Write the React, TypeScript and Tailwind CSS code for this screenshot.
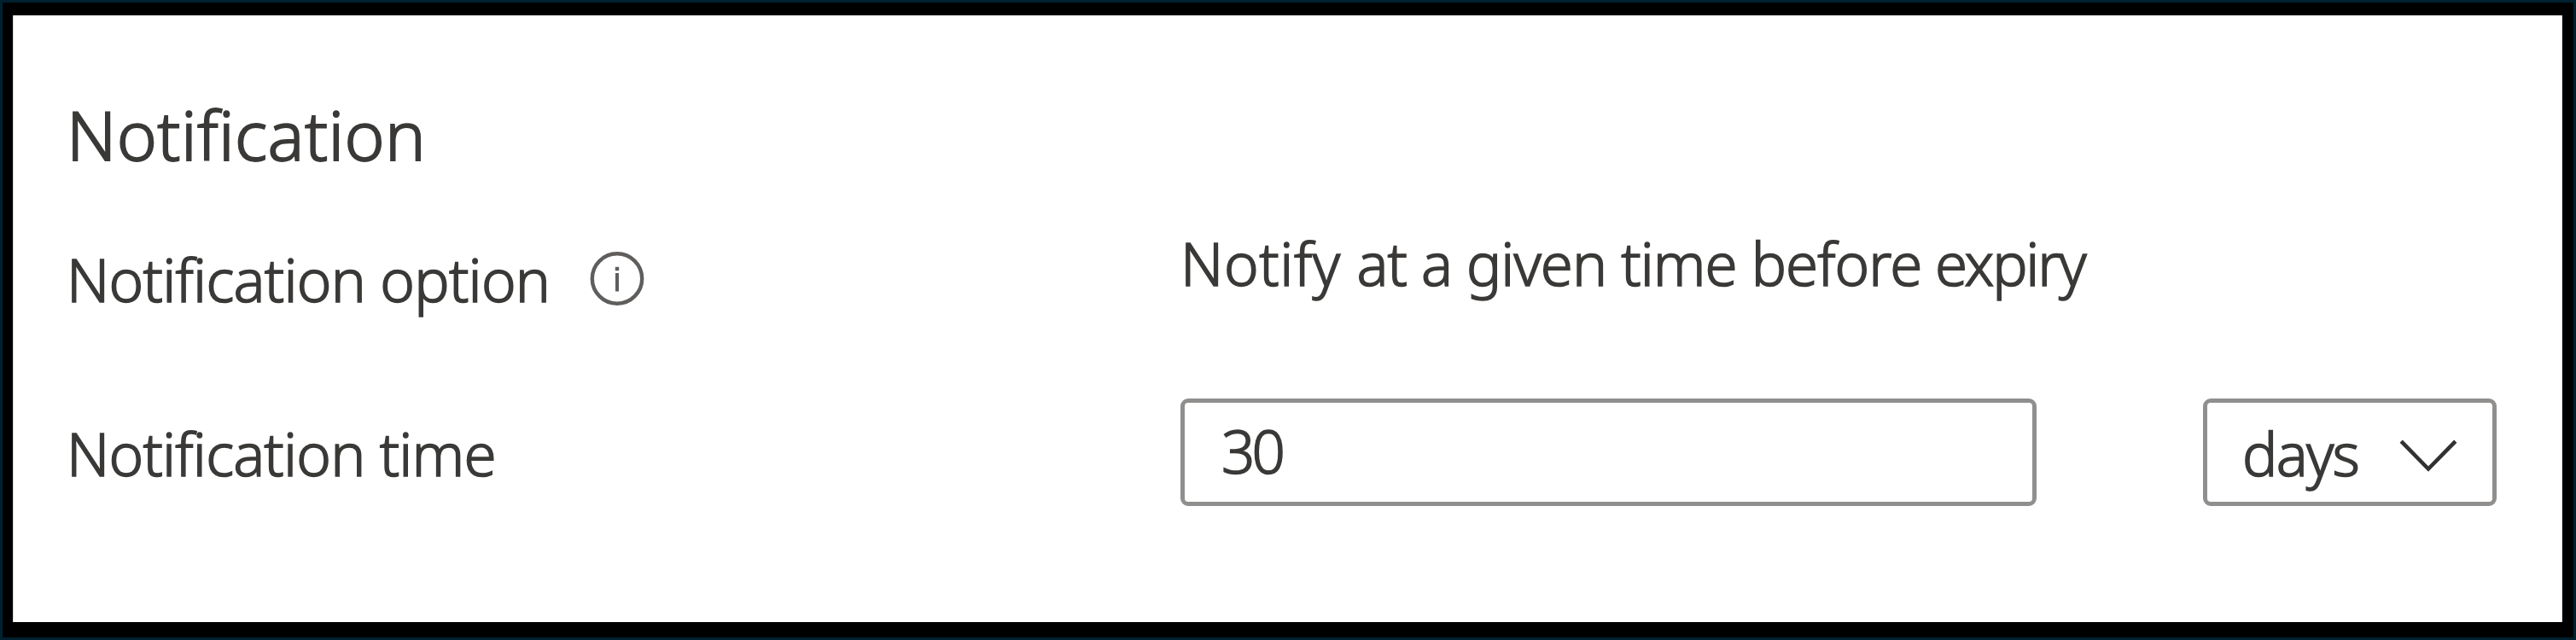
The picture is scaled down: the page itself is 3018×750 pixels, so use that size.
const textStyle =
  "block whitespace-nowrap text-[69px] font-light leading-[100px] [-webkit-text-stroke:1.5px_#3a3937]";

const boxStyle = "h-[126px] shrink-0 rounded-[9px] border-[5px] border-[#918f8d]";

function InfoIcon() {
  return (
    <svg className="mt-[16px] ml-[46px] h-[66px] w-[66px] shrink-0" viewBox="0 0 66 66" fill="none" stroke="#605e5c">
      <circle cx="33" cy="33.5" r="29.2" strokeWidth="4.4" />
      <path d="M33 27v21.5" strokeWidth="4" />
      <path d="M33 19.8v4.4" strokeWidth="4.4" />
    </svg>
  );
}

function ChevronDown() {
  return (
    <svg className="h-[38px] w-[68px] shrink-0" viewBox="0 0 68 38" fill="none" stroke="#323130" strokeWidth="4.6">
      <path d="M2.2 2.2 34 34.5 65.8 2.2" />
    </svg>
  );
}

export default function App() {
  return (
    <div className="h-[750px] w-[3018px] bg-[#00212f] p-[3px] font-['Noto_Sans',sans-serif] text-[#3a3937]">
      <div className="h-full bg-black px-3 pt-[15px] pb-[18px]">
        <main className="h-[711px] w-[2987px] border-x border-[#dcdcdc] bg-white pt-[89px] pl-[62px]">
          <h1 className="h-[151px] text-[80px] font-light leading-[100px] tracking-[0.4px] [-webkit-text-stroke:1.8px_#3a3937]">
            Notification
          </h1>
          <section className="flex h-[209px]">
            <div className="flex w-[1305px] shrink-0 pt-[19px]">
              <span className={`${textStyle} tracking-[-0.75px]`}>Notification option</span>
              <InfoIcon />
            </div>
            <p className={`${textStyle} tracking-[-0.95px]`}>
              <span className="tracking-[0.6px]">Notify </span>
              at a given time before
              <span className="tracking-[-2.2px]"> expiry</span>
            </p>
          </section>
          <section className="flex h-[126px]">
            <label htmlFor="notification-time" className={`${textStyle} w-[1305px] shrink-0 pt-[14px] tracking-[-0.8px]`}>
              Notification time
            </label>
            <div id="notification-time" className={`${boxStyle} w-[1003px] pt-[6px] pl-[43px]`}>
              <span className={`${textStyle} tracking-[-4px]`}>30</span>
            </div>
            <button type="button" className={`${boxStyle} ml-[195px] flex w-[344px] items-start pl-[41px]`}>
              <span className={`${textStyle} w-[184px] pt-[9px] text-left tracking-[-1.7px]`}>days</span>
              <span className="pt-[43px]">
                <ChevronDown />
              </span>
            </button>
          </section>
        </main>
      </div>
    </div>
  );
}
